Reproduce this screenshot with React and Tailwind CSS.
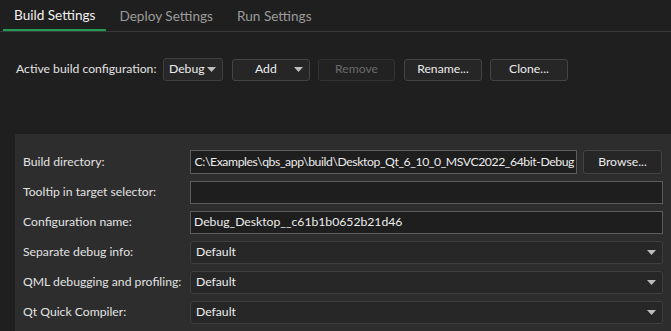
const Arrow = ({ className = "" }) => (
  <svg width="9" height="5" viewBox="0 0 9 5" className={`shrink-0 ${className}`}>
    <path d="M0 0h9L4.5 5z" fill="#bdbdbd" />
  </svg>
);

function Combo({ value, className = "" }) {
  return (
    <div
      className={`flex h-[23px] items-center rounded-[3px] border border-[#3f3f3f] bg-[#272727] pl-[5px] pr-[6px] text-[#ececec] ${className}`}
    >
      <span>{value}</span>
      <Arrow className="ml-auto" />
    </div>
  );
}

function Button({ children, disabled, className = "" }) {
  return (
    <div
      className={`flex h-[22px] shrink-0 items-center rounded-[3px] border ${
        disabled
          ? "border-[#333333] bg-[#222222] text-[#6a6a6a]"
          : "border-[#444444] bg-[#262626] text-[#ececec]"
      } ${className}`}
    >
      {children}
    </div>
  );
}

function Row({ label, children }) {
  return (
    <div className="flex items-center">
      <span className="w-[167px] shrink-0 whitespace-nowrap text-[#e2e2e2]">{label}</span>
      <div className="flex min-w-0 flex-1 gap-[6px] pr-[8px]">{children}</div>
    </div>
  );
}

export default function App() {
  return (
    <div
      className="h-[331px] w-[671px] overflow-hidden bg-[#1f1f1f] text-[12.2px] leading-none"
      style={{ fontFamily: '"Segoe UI", Lato, "Noto Sans", sans-serif' }}
    >
      {/* tabs */}
      <div className="flex h-[32px] items-stretch border-b border-[#3a3a3a] pl-[3px] text-[13.6px]">
        <div className="flex items-center border-b-2 border-[#1f9d55] px-[11px] pt-[2px] text-[#f0f0f0]">
          Build Settings
        </div>
        <div className="flex items-center px-[13px] pt-[2px] text-[#9b9b9b]">
          Deploy Settings
        </div>
        <div className="flex items-center px-[11px] pt-[2px] text-[#9b9b9b]">
          Run Settings
        </div>
      </div>

      {/* toolbar */}
      <div className="mt-[26px] flex items-center pl-[16px] text-[#e2e2e2]">
        <span className="w-[147px] shrink-0 whitespace-nowrap">Active build configuration:</span>
        <Combo value="Debug" className="w-[60px] shrink-0" />
        <Button className="ml-[9px] w-[78px] pl-[22px] pr-[6px]">
          <span>Add</span>
          <Arrow className="ml-auto" />
        </Button>
        <Button disabled className="ml-[8px] w-[77px] justify-center">
          Remove
        </Button>
        <Button className="ml-[9px] w-[78px] justify-center">Rename...</Button>
        <Button className="ml-[8px] w-[78px] justify-center">Clone...</Button>
      </div>

      {/* panel */}
      <div className="ml-[15px] mt-[53px] flex h-[200px] flex-col gap-[7px] bg-[#2d2d2d] pl-[8px] pt-[16px]">
        <Row label="Build directory:">
          <div className="flex h-[24px] w-[387px] shrink-0 items-center justify-end overflow-hidden whitespace-nowrap border border-[#5c5c5c] bg-[#1e1e1e] pr-[2px] text-[#ececec]">
            <span className="shrink-0 tracking-[-0.4px]">C:\Examples\qbs_app\build\Desktop_Qt_6_10_0_MSVC2022_64bit-Debug</span>
          </div>
          <Button className="h-[24px] w-[79px] justify-center">Browse...</Button>
        </Row>
        <Row label="Tooltip in target selector:">
          <div className="h-[23px] flex-1 border border-[#5c5c5c] bg-[#1e1e1e]" />
        </Row>
        <Row label="Configuration name:">
          <div className="flex h-[23px] flex-1 items-center border border-[#5c5c5c] bg-[#1e1e1e] pl-[3px] text-[#ececec]">
            Debug_Desktop__c61b1b0652b21d46
          </div>
        </Row>
        <Row label="Separate debug info:">
          <Combo value="Default" className="flex-1" />
        </Row>
        <Row label="QML debugging and profiling:">
          <Combo value="Default" className="flex-1" />
        </Row>
        <Row label="Qt Quick Compiler:">
          <Combo value="Default" className="flex-1" />
        </Row>
      </div>
    </div>
  );
}
